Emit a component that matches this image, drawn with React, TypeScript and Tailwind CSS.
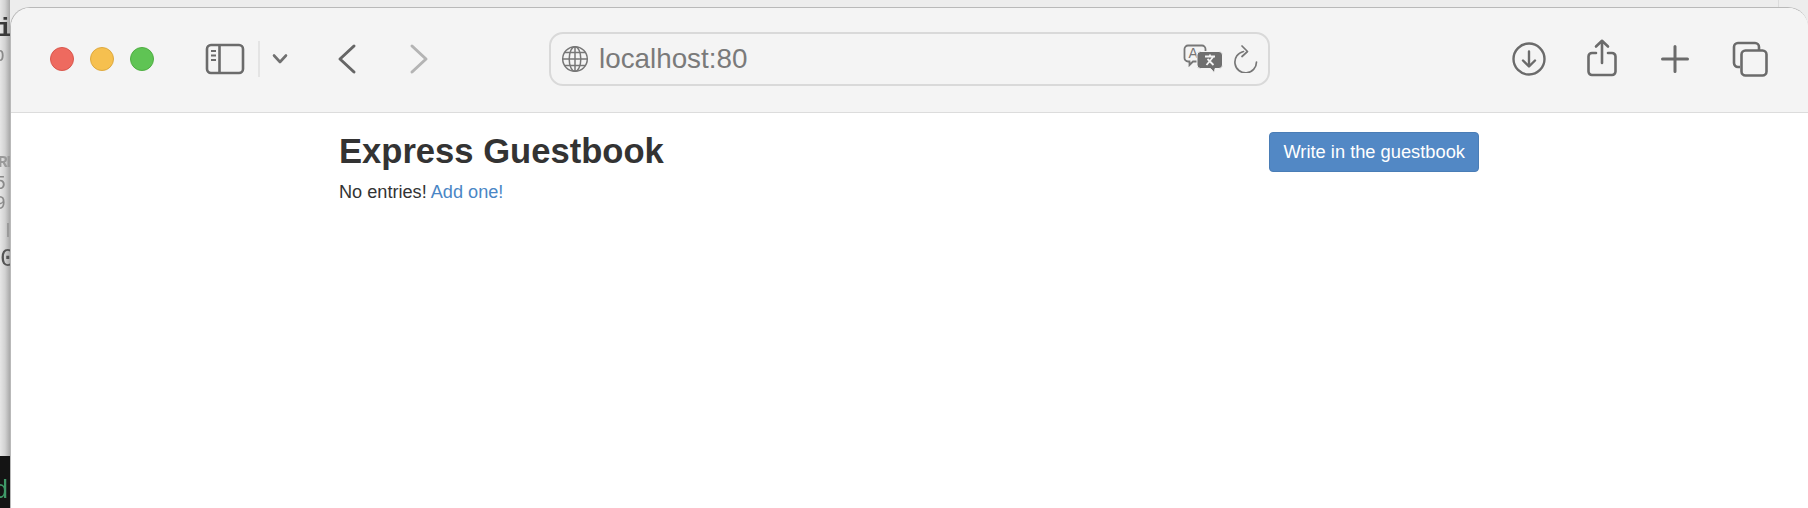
const sans = { fontFamily: '"Liberation Sans", Arial, sans-serif' };

function SidebarIcon() {
  return (
    <svg width="40" height="32" viewBox="0 0 40 32" fill="none" stroke="#6b6b6b" strokeWidth="2.6">
      <rect x="2" y="2" width="36" height="28" rx="4" />
      <path d="M14.5 2v28" />
      <path d="M6 8h5M6 12.500h5M6 17h5" strokeWidth="2" />
    </svg>
  );
}

function Chevron() {
  return (
    <svg width="16" height="12" viewBox="0 0 16 12" fill="none" stroke="#707070" strokeWidth="2.6" strokeLinecap="round" strokeLinejoin="round">
      <path d="M2 2.500l6 6.500 6-6.500" />
    </svg>
  );
}

function Arrow({ back }: { back?: boolean }) {
  return (
    <svg width="20" height="32" viewBox="0 0 20 32" fill="none" stroke={back ? "#666666" : "#b4b4b4"} strokeWidth="3" strokeLinecap="round" strokeLinejoin="round">
      <path d={back ? "M17 3L3 16l14 13" : "M3 3l14 13L3 29"} />
    </svg>
  );
}

function Globe() {
  return (
    <svg width="28" height="28" viewBox="0 0 28 28" fill="none" stroke="#777777" strokeWidth="1.500">
      <circle cx="14" cy="14" r="12.300" />
      <ellipse cx="14" cy="14" rx="5.800" ry="12.300" />
      <path d="M14 1.700v24.600M1.700 14h24.600M3.500 7.500h21M3.500 20.500h21" />
    </svg>
  );
}

function Translate() {
  return (
    <svg width="40" height="30" viewBox="0 0 40 30" fill="none">
      <path d="M5 1.500h14a3.500 3.500 0 0 1 3.500 3.500v9a3.500 3.500 0 0 1-3.500 3.500h-9l-3.500 3.500v-3.500H5A3.500 3.500 0 0 1 1.500 14V5A3.500 3.500 0 0 1 5 1.500z" stroke="#777777" strokeWidth="1.800" fill="#f4f4f4" />
      <text x="5.500" y="14" fontSize="14" fill="#777777" style={sans}>A</text>
      <path d="M18 7.500h18a3.500 3.500 0 0 1 3.500 3.500v10a3.500 3.500 0 0 1-3.500 3.500h-4l-.5 4.500-4-4.500h-10a3.500 3.500 0 0 1-3.500-3.500V11a3.500 3.500 0 0 1 3.500-3.500z" fill="#6f6f6f" stroke="#f4f4f4" strokeWidth="1" />
      <path d="M22 12.500h10M27 10.500v2M23.500 21l7-8.500M24.500 15l6 6" stroke="#f4f4f4" strokeWidth="1.800" />
    </svg>
  );
}

function Reload() {
  return (
    <svg width="24" height="28" viewBox="0 0 24 28" fill="none" stroke="#777777" strokeWidth="1.700" strokeLinecap="round" strokeLinejoin="round">
      <path d="M9.500 6.500A10.800 10.800 0 1 0 22.500 17" />
      <path d="M8 1l5.500 5.500L8 11.500" />
    </svg>
  );
}

function DownloadIcon() {
  return (
    <svg width="34" height="34" viewBox="0 0 34 34" fill="none" stroke="#6b6b6b" strokeWidth="2.400" strokeLinecap="round" strokeLinejoin="round">
      <circle cx="17" cy="17" r="15.500" />
      <path d="M17 9.500v14.500M11 18.500l6 6 6-6" />
    </svg>
  );
}

function ShareIcon() {
  return (
    <svg width="30" height="38" viewBox="0 0 30 38" fill="none" stroke="#6b6b6b" strokeWidth="2.600" strokeLinecap="round" strokeLinejoin="round">
      <path d="M9 14H5a3.500 3.500 0 0 0-3.500 3.500v15A3.500 3.500 0 0 0 5 36h20a3.500 3.500 0 0 0 3.500-3.500v-15A3.500 3.500 0 0 0 25 14h-4" />
      <path d="M15 24V2M9 7.500L15 1.800l6 5.700" />
    </svg>
  );
}

function PlusIcon() {
  return (
    <svg width="28" height="28" viewBox="0 0 28 28" fill="none" stroke="#6b6b6b" strokeWidth="3" strokeLinecap="round">
      <path d="M14 1.500v25M1.500 14h25" />
    </svg>
  );
}

function TabsIcon() {
  return (
    <svg width="36" height="36" viewBox="0 0 36 36" fill="none" stroke="#6b6b6b" strokeWidth="2.600">
      <path d="M8 26H6a4 4 0 0 1-4-4V6a4 4 0 0 1 4-4h17a4 4 0 0 1 4 4v3" />
      <rect x="9.500" y="9.500" width="25" height="25" rx="4" />
    </svg>
  );
}

// bits of the terminal window that sticks out behind the browser
function BehindWindow() {
  return (
    <>
      <div className="absolute left-0 top-0 h-[456px] w-[10px] bg-gradient-to-r from-[#e6e6e6] via-[#d2d2d2] to-[#a9a9a9]" />
      <div className="absolute left-0 top-[456px] h-[52px] w-[10px] overflow-hidden bg-[#141414]">
        <span className="absolute left-[-7px] top-[20px] text-[26px] leading-[30px] text-[#3f9a68] blur-[0.5px]" style={{ fontFamily: '"Liberation Mono", monospace' }}>
          d
        </span>
      </div>
      <div className="absolute left-0 top-0 h-[456px] w-[10px] overflow-hidden blur-[0.6px]" style={{ fontFamily: '"Liberation Mono", monospace' }}>
        <span className="absolute left-[-3px] top-[14px] text-[26px] font-bold leading-[30px] text-[#3a3a3a]">i</span>
        <span className="absolute left-[-7px] top-[44px] text-[20px] leading-[24px] text-[#8a8a8a]">p</span>
        <span className="absolute left-[-2px] top-[154px] text-[16px] font-bold leading-[18px] tracking-[-1px] text-[#9a9a9a]">RE</span>
        <span className="absolute left-[-6px] top-[174px] text-[20px] leading-[20px] text-[#8a8a8a]">5</span>
        <span className="absolute left-[-6px] top-[194px] text-[20px] leading-[20px] text-[#8a8a8a]">9</span>
        <span className="absolute left-[7px] top-[223px] h-[14px] w-[2px] bg-[#9a9a9a]" />
        <span className="absolute left-[0px] top-[244px] text-[26px] leading-[30px] text-[#555555]">0</span>
      </div>
      <div className="absolute right-[29px] top-0 h-[7px] w-px bg-[#dcdcdc]" />
    </>
  );
}

export default function App() {
  return (
    <div className="relative h-[508px] w-[1808px] overflow-hidden bg-[#ededed]">
      <BehindWindow />

      <div className="relative ml-[10px] mt-[7px] h-[501px] w-[1798px] overflow-hidden rounded-t-[20px] border-t border-l border-[#b9b9b9] bg-white">
        <div className="flex h-[105px] items-center border-b border-[#dcdcdc] bg-[#f4f4f4] pb-[2px]">
          <div className="ml-[39px] flex gap-4">
            <span className="h-6 w-6 rounded-full border border-[#d9574d] bg-[#ee6a5f]" />
            <span className="h-6 w-6 rounded-full border border-[#dea93f] bg-[#f6c04f]" />
            <span className="h-6 w-6 rounded-full border border-[#4fae42] bg-[#5fc454]" />
          </div>
          <div className="ml-[51px]">
            <SidebarIcon />
          </div>
          <div className="ml-[13px] h-[36px] w-[2px] bg-[#e4e4e4]" />
          <div className="ml-[12px]">
            <Chevron />
          </div>
          <div className="ml-[49px]">
            <Arrow back />
          </div>
          <div className="ml-[52px]">
            <Arrow />
          </div>

          <div className="ml-[120px] flex h-[54px] w-[721px] items-center rounded-[14px] border-2 border-[#d9d9d9] pl-[10px] pr-[10px]">
            <Globe />
            <span className="ml-[10px] text-[27.8px] leading-none text-[#7a7a7a]" style={sans}>
              localhost:80
            </span>
            <div className="ml-auto flex items-center gap-[11px]">
              <Translate />
              <Reload />
            </div>
          </div>

          <div className="ml-[242px]">
            <DownloadIcon />
          </div>
          <div className="ml-[41px] mt-[-2px]">
            <ShareIcon />
          </div>
          <div className="ml-[44px]">
            <PlusIcon />
          </div>
          <div className="ml-[43px]">
            <TabsIcon />
          </div>
        </div>

        <main className="flex w-[1468px] items-start justify-between pl-[328px] pt-[19px]" style={sans}>
          <div>
            <h1 className="text-[34.6px] font-bold leading-[39px] text-[#333333]">Express Guestbook</h1>
            <p className="mt-[9px] text-[18.15px] leading-[24px] text-[#333333]">
              No entries! <a className="text-[#4a86c5]">Add one!</a>
            </p>
          </div>
          <a className="rounded-[4px] border border-[#4a7db6] bg-[#5288c5] px-[13px] py-[7px] text-[18.3px] leading-[24px] text-white">
            Write in the guestbook
          </a>
        </main>
      </div>
    </div>
  );
}
